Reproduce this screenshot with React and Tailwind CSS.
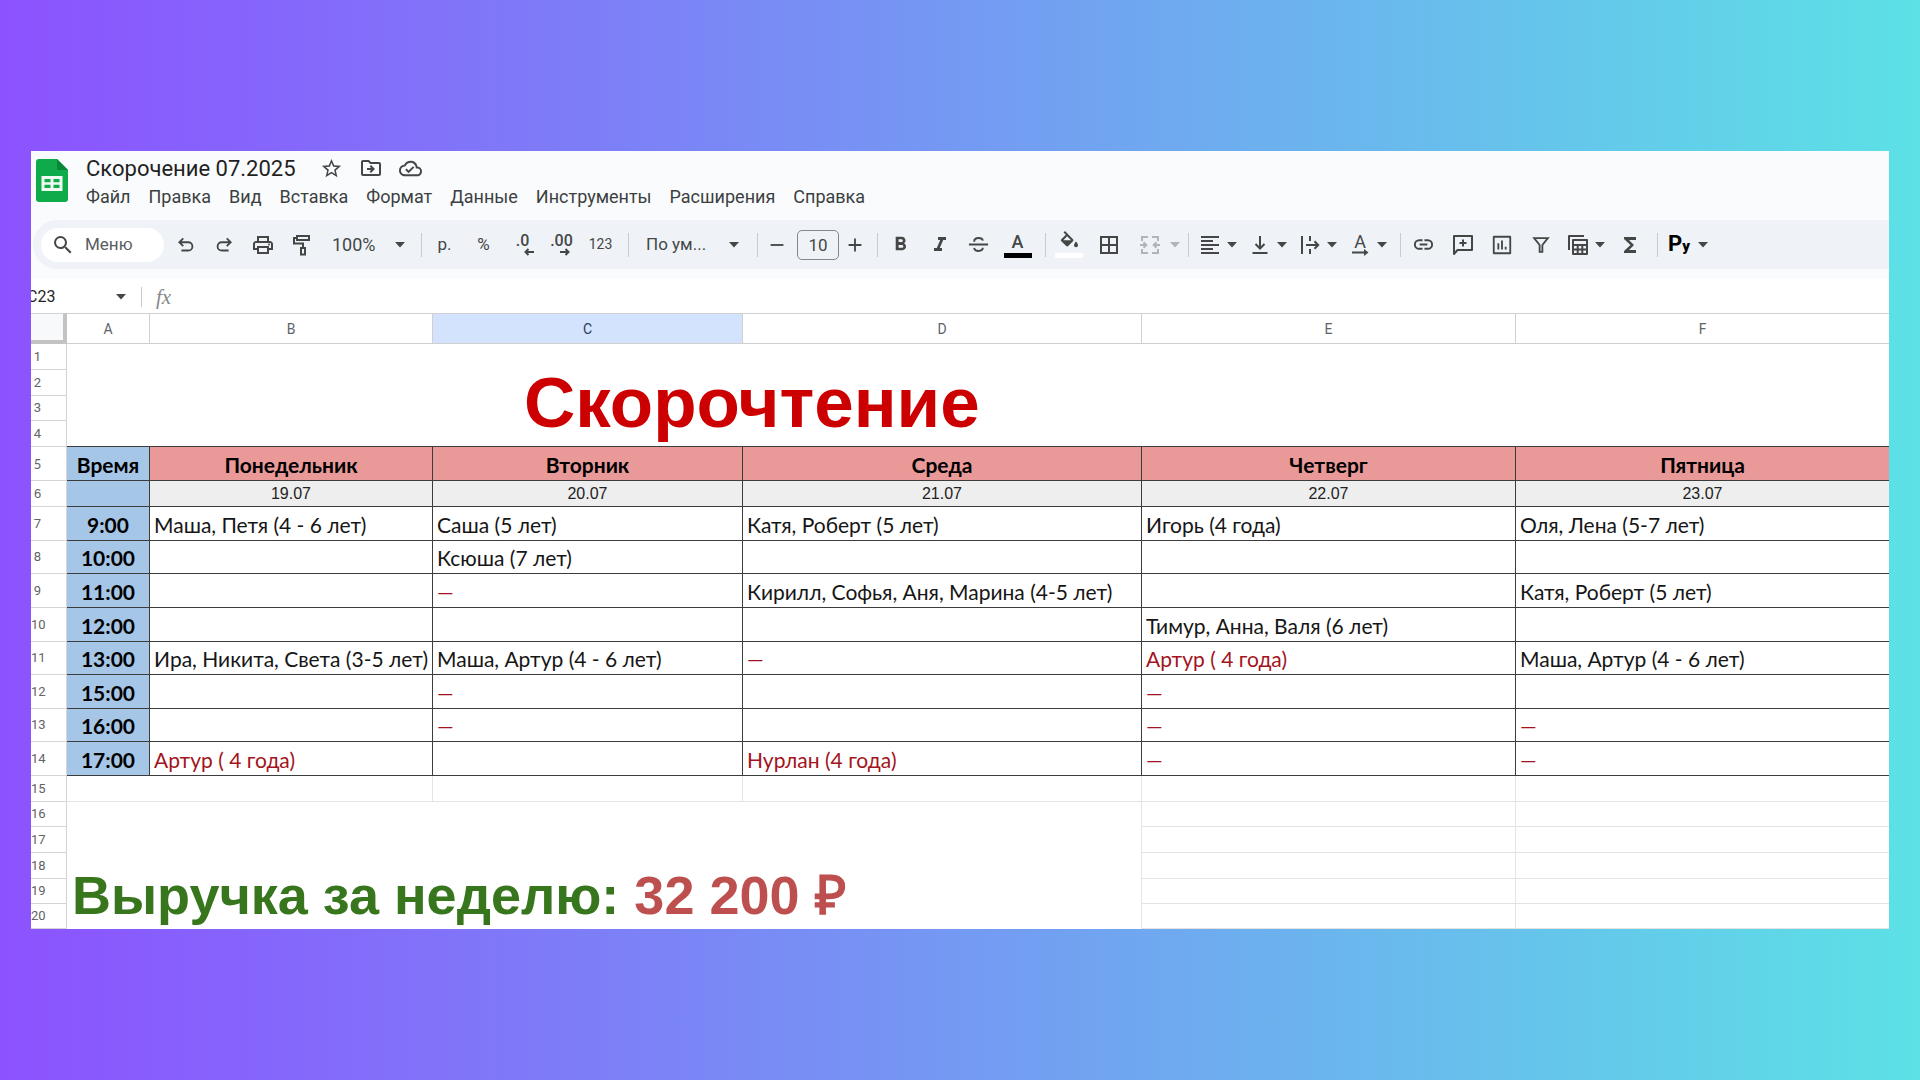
import { useState } from 'react';
import {
  MdSearch,
  MdStarBorder,
  MdOutlineDriveFileMove,
  MdOutlineCloudDone,
  MdOutlinePrint,
  MdFormatBold,
  MdFormatItalic,
  MdBorderAll,
  MdFormatAlignLeft,
  MdFunctions,
} from 'react-icons/md';

const menuItems = ['Файл', 'Правка', 'Вид', 'Вставка', 'Формат', 'Данные', 'Инструменты', 'Расширения', 'Справка'];

const columns = ['A', 'B', 'C', 'D', 'E', 'F'];

const days = ['Понедельник', 'Вторник', 'Среда', 'Четверг', 'Пятница'];
const dates = ['19.07', '20.07', '21.07', '22.07', '23.07'];

// "red" marks cancelled or free slots
const red = (text) => ({ text, red: true });

const lessons = [
  { row: 7, height: 'h-[34px]', time: '9:00', cells: ['Маша, Петя (4 - 6 лет)', 'Саша (5 лет)', 'Катя, Роберт (5 лет)', 'Игорь (4 года)', 'Оля, Лена (5-7 лет)'] },
  { row: 8, height: 'h-[33px]', time: '10:00', cells: ['', 'Ксюша (7 лет)', '', '', ''] },
  { row: 9, height: 'h-[34px]', time: '11:00', cells: ['', red('—'), 'Кирилл, Софья, Аня, Марина (4-5 лет)', '', 'Катя, Роберт (5 лет)'] },
  { row: 10, height: 'h-[34px]', time: '12:00', cells: ['', '', '', 'Тимур, Анна, Валя (6 лет)', ''] },
  { row: 11, height: 'h-[33px]', time: '13:00', cells: ['Ира, Никита, Света (3-5 лет)', 'Маша, Артур (4 - 6 лет)', red('—'), red('Артур ( 4 года)'), 'Маша, Артур (4 - 6 лет)'] },
  { row: 12, height: 'h-[34px]', time: '15:00', cells: ['', red('—'), '', red('—'), ''] },
  { row: 13, height: 'h-[33px]', time: '16:00', cells: ['', red('—'), '', red('—'), red('—')] },
  { row: 14, height: 'h-[34px]', time: '17:00', cells: [red('Артур ( 4 года)'), '', red('Нурлан (4 года)'), red('—'), red('—')] },
];

function Svg({ children, size = 24 }) {
  return (
    <svg width={size} height={size} viewBox="0 0 24 24" fill="none" stroke="currentColor" strokeWidth="2">
      {children}
    </svg>
  );
}

function Caret() {
  return (
    <svg className="shrink-0" width="10" height="6" viewBox="0 0 10 6" fill="currentColor">
      <path d="M0 0h10L5 5.5z" />
    </svg>
  );
}

function ToolButton({ label, children }) {
  return (
    <button type="button" aria-label={label} className="flex h-9 w-[39px] shrink-0 items-center justify-center">
      {children}
    </button>
  );
}

function SplitButton({ label, children }) {
  return (
    <button type="button" aria-label={label} className="flex h-9 w-[50px] shrink-0 items-center gap-[5px] pl-1.5">
      {children}
      <Caret />
    </button>
  );
}

function Divider() {
  return <span className="mr-[3px] ml-2 h-6 w-px shrink-0 bg-[#c7cbd1]" />;
}

function SheetsLogo() {
  return (
    <svg width="32" height="43" viewBox="0 0 32 43">
      <path d="M3 0h18l11 11v29a3 3 0 0 1-3 3H3a3 3 0 0 1-3-3V3a3 3 0 0 1 3-3z" fill="#0fab4b" />
      <path d="M21 0l11 11H23a2 2 0 0 1-2-2z" fill="#0b8537" />
      <path d="M5.500 17h21v15h-21zM8.500 20v3.200h6V20zm9 0v3.200h6V20zm-9 5.800V29h6v-3.200zm9 0V29h6v-3.200z" fill="#f1faf4" fillRule="evenodd" />
    </svg>
  );
}

function Header() {
  return (
    <div className="flex items-start gap-[18px] pt-[3px] pl-[5px]">
      <div className="pt-[5px]">
        <SheetsLogo />
      </div>
      <div>
        <div className="flex h-7 items-center text-[#444746]">
          <h1 className="mr-6 text-[22px] text-[#1f1f1f]">Скорочение 07.2025</h1>
          <div className="flex items-center gap-4">
            <button type="button" aria-label="Добавить в избранное"><MdStarBorder size={23} /></button>
            <button type="button" aria-label="Переместить"><MdOutlineDriveFileMove size={24} /></button>
            <button type="button" aria-label="Сохранено на диске"><MdOutlineCloudDone size={23} /></button>
          </div>
        </div>
        <nav className="flex h-7 items-center gap-[18px] text-[18px] text-[#3c3f41]">
          {menuItems.map((item) => (
            <button key={item} type="button">{item}</button>
          ))}
        </nav>
      </div>
    </div>
  );
}

function Toolbar() {
  const [fontSize, setFontSize] = useState(10);

  return (
    <div className="mt-2.5 ml-0.5 flex h-[49px] items-center rounded-l-full bg-[#eff3f8] pl-2 text-[#444746]">
      <label className="mr-[3px] flex h-[34px] w-[123px] shrink-0 items-center rounded-full bg-white pl-2.5">
        <MdSearch size={24} className="shrink-0" />
        <input
          type="text"
          aria-label="Поиск в меню"
          placeholder="Меню"
          className="ml-2.5 w-16 bg-transparent text-[17px] outline-none placeholder:text-[#5a5d5f]"
        />
      </label>

      <div className="flex shrink-0">
        <button type="button" aria-label="Отменить" className="flex h-9 w-[38px] items-center justify-center">
          <Svg size={22}><path d="M9 4.700 4.700 9 9 13.300M5 9h9.500a4.500 4.500 0 0 1 0 9H7" /></Svg>
        </button>
        <button type="button" aria-label="Повторить" className="flex h-9 w-[38px] items-center justify-center">
          <Svg size={22}><path d="M15 4.700 19.300 9 15 13.300M19 9H9.500a4.500 4.500 0 0 0 0 9H17" /></Svg>
        </button>
        <button type="button" aria-label="Печать" className="flex h-9 w-10 items-center justify-center">
          <MdOutlinePrint size={24} />
        </button>
        <button type="button" aria-label="Копировать форматирование" className="flex h-9 w-[38px] items-center justify-center">
          <Svg>
            <path d="M7 3h12v4H7zM7 5H4v5.500h9V15M11 15h4v6.500h-4z" />
          </Svg>
        </button>
      </div>

      <div className="relative flex w-[92px] shrink-0 items-center">
        <select aria-label="Масштаб" className="w-full appearance-none bg-transparent pl-[11px] text-[18px] outline-none">
          <option>100%</option>
        </select>
        <span className="pointer-events-none absolute right-2"><Caret /></span>
      </div>
      <Divider />

      <ToolButton label="Денежный формат"><span className="text-[17px]">р.</span></ToolButton>
      <ToolButton label="Процентный формат"><span className="text-[17px]">%</span></ToolButton>
      <ToolButton label="Меньше знаков после запятой">
        <span className="flex flex-col items-center">
          <span className="text-[16px] leading-[14px] font-medium">.0</span>
          <svg className="ml-3" width="10" height="8" viewBox="0 0 10 8" fill="none" stroke="currentColor" strokeWidth="2">
            <path d="M10 4H2M4.500 1l-3 3 3 3" />
          </svg>
        </span>
      </ToolButton>
      <ToolButton label="Больше знаков после запятой">
        <span className="flex flex-col items-center">
          <span className="text-[16px] leading-[14px] font-medium">.00</span>
          <svg className="ml-2" width="10" height="8" viewBox="0 0 10 8" fill="none" stroke="currentColor" strokeWidth="2">
            <path d="M0 4h8M5.500 1l3 3-3 3" />
          </svg>
        </span>
      </ToolButton>
      <ToolButton label="Другие форматы"><span className="text-[14px]">123</span></ToolButton>
      <Divider />

      <div className="relative flex w-[117px] shrink-0 items-center">
        <select aria-label="Шрифт" className="w-full appearance-none bg-transparent pl-3.5 text-[17px] outline-none">
          <option>По ум...</option>
        </select>
        <span className="pointer-events-none absolute right-2.5"><Caret /></span>
      </div>
      <Divider />

      <button
        type="button"
        aria-label="Уменьшить размер"
        onClick={() => setFontSize(fontSize - 1)}
        className="flex h-9 w-8 shrink-0 items-center justify-center"
      >
        <Svg size={22}><path d="M5 12h14" /></Svg>
      </button>
      <input
        type="text"
        aria-label="Размер шрифта"
        value={fontSize}
        onChange={(e) => setFontSize(Number(e.target.value) || 0)}
        className="ml-1 h-[30px] w-[42px] shrink-0 rounded-[5px] border border-[#84878a] bg-transparent text-center text-[17px] outline-none"
      />
      <button
        type="button"
        aria-label="Увеличить размер"
        onClick={() => setFontSize(fontSize + 1)}
        className="flex h-9 w-8 shrink-0 items-center justify-center"
      >
        <Svg size={22}><path d="M5 12h14M12 5v14" /></Svg>
      </button>
      <span className="mr-[3px] ml-1.5 h-6 w-px shrink-0 bg-[#c7cbd1]" />

      <ToolButton label="Полужирный"><MdFormatBold size={23} /></ToolButton>
      <ToolButton label="Курсив"><MdFormatItalic size={24} /></ToolButton>
      <ToolButton label="Зачеркнутый">
        <Svg size={23}><path d="M2 12h20M7.500 9c0-2.500 2-3.700 4.500-3.700S16.300 6.500 16.500 8M7.500 15.500c.3 2 2 3.200 4.500 3.200s4.500-1.200 4.500-3.200" /></Svg>
      </ToolButton>
      <ToolButton label="Цвет текста">
        <span className="flex flex-col items-center gap-1 pt-1">
          <span className="text-[18px] leading-[14px] font-medium">A</span>
          <span className="h-[5px] w-7 bg-black" />
        </span>
      </ToolButton>
      <Divider />

      <ToolButton label="Цвет заливки">
        <span className="flex flex-col items-center gap-[3px]">
          <svg width="20" height="19" viewBox="0 0 20 19" fill="currentColor">
            <path d="M4.500 1.500 6 0l8 8.200c.6.600.6 1.400 0 2L9.200 15c-.6.600-1.400.6-2 0L2.300 10.200c-.6-.6-.6-1.400 0-2L6.800 3.800zM8.200 5.300 4.300 9.200h7.800z" fillRule="evenodd" />
            <path d="M17 10.500s2 2.200 2 3.700a2 2 0 0 1-4 0c0-1.500 2-3.700 2-3.700z" />
          </svg>
          <span className="h-[5px] w-7 bg-white" />
        </span>
      </ToolButton>
      <button type="button" aria-label="Границы" className="flex h-9 w-[42px] shrink-0 items-center justify-center">
        <MdBorderAll size={24} />
      </button>
      <button type="button" disabled aria-label="Объединить ячейки" className="flex h-9 w-[50px] shrink-0 items-center gap-2 pl-2 text-[#b1b4b8]">
        <Svg>
          <path d="M10 4H4v4M14 4h6v4M10 20H4v-4M14 20h6v-4M2 12h6M5.500 9.300 8.300 12l-2.800 2.700M22 12h-6M18.500 9.300 15.700 12l2.800 2.700" />
        </Svg>
        <Caret />
      </button>
      <Divider />

      <SplitButton label="Выравнивание по горизонтали"><MdFormatAlignLeft size={24} /></SplitButton>
      <SplitButton label="Выравнивание по вертикали">
        <Svg><path d="M4.500 20h15M12 3v12.500M7.500 11l4.500 4.500 4.500-4.500" /></Svg>
      </SplitButton>
      <SplitButton label="Перенос текста">
        <Svg><path d="M4 3v18M12 3v5M12 16v5M8 12h12M16.500 8.300 20.200 12l-3.700 3.700" /></Svg>
      </SplitButton>
      <SplitButton label="Поворот текста">
        <span className="flex w-6 flex-col items-center pt-0.5">
          <span className="text-[18px] leading-[14px]">A</span>
          <svg width="17" height="7" viewBox="0 0 17 7" fill="currentColor">
            <path d="M0 2.500h12V0l4.500 3.500L12 7V4.500H0z" />
          </svg>
        </span>
      </SplitButton>
      <Divider />

      <ToolButton label="Вставить ссылку">
        <Svg size={23}><path d="M11 7.500H7.500a4.500 4.500 0 0 0 0 9H11M13 7.500h3.500a4.500 4.500 0 0 1 0 9H13M8 12h8" /></Svg>
      </ToolButton>
      <ToolButton label="Добавить комментарий">
        <Svg><path d="M3 21V3h18v14H6.500zM12 6.500v7M8.500 10h7" strokeLinejoin="round" /></Svg>
      </ToolButton>
      <ToolButton label="Вставить диаграмму">
        <Svg size={22}><path d="M3 3h18v18H3zM8 10v7M12 7v10M16 14v3" strokeLinejoin="round" /></Svg>
      </ToolButton>
      <ToolButton label="Создать фильтр">
        <Svg size={22}><path d="M4.500 4.500h15L13.500 12v7.500h-3V12z" /></Svg>
      </ToolButton>
      <SplitButton label="Представления таблицы">
        <Svg>
          <path d="M3 17V3h15M7 7h14v14H7zM7 12h14M7 16.500h14M11.700 12v9M16.300 12v9" strokeLinejoin="round" />
        </Svg>
      </SplitButton>
      <ToolButton label="Функции"><MdFunctions size={24} /></ToolButton>
      <Divider />
      <button type="button" aria-label="Python" className="flex h-9 w-[52px] shrink-0 items-center gap-[7px] pl-1.5">
        <span className="flex w-6 items-baseline justify-center text-black">
          <span className="text-[22px] leading-6 font-bold">P</span>
          <span className="text-[15px] leading-6 font-black">y</span>
        </span>
        <Caret />
      </button>
    </div>
  );
}

function FormulaBar() {
  return (
    <div className="flex h-[34px] items-center overflow-hidden bg-white pt-0.5">
      <input
        type="text"
        aria-label="Ячейка"
        defaultValue="C23"
        className="-ml-1 w-[89px] shrink-0 bg-transparent text-[16px] text-[#1f1f1f] outline-none"
      />
      <span className="text-[#444746]"><Caret /></span>
      <span className="ml-[15px] h-5 w-px bg-[#c7cbd1]" />
      <label htmlFor="formula" className="ml-3.5 font-['Liberation_Serif',serif] text-[21px] leading-6 text-[#85888b] italic">fx</label>
      <input id="formula" type="text" className="ml-3 grow bg-transparent text-[16px] outline-none" />
    </div>
  );
}

function RowNumber({ n, height }) {
  return (
    <th scope="row" className={`${height} border-r border-b border-[#d5d5d5] p-0 pr-[22px] text-center text-[13px] leading-4 font-normal whitespace-nowrap text-[#606367]`}>
      {n}
    </th>
  );
}

function LessonCell({ value }) {
  const text = value.text ?? value;
  return (
    <td className={`border-r border-b border-[#3c3c3c] p-0 pl-1 align-bottom font-[Lato,sans-serif] text-[21px] leading-[30px] whitespace-nowrap last:border-r-0 ${value.red ? 'text-[#a31420]' : 'text-[#161616]'}`}>
      {text}
    </td>
  );
}

function Sheet() {
  return (
    <table className="w-full table-fixed border-separate border-spacing-0 bg-white">
      <colgroup>
        <col className="w-9" />
        <col className="w-[83px]" />
        <col className="w-[283px]" />
        <col className="w-[310px]" />
        <col className="w-[399px]" />
        <col className="w-[374px]" />
        <col />
      </colgroup>
      <thead>
        <tr>
          <td className="h-[31px] border-t border-r-4 border-b-4 border-t-[#d5d5d5] border-r-[#c3c3c3] border-b-[#c3c3c3] bg-[#f8f9fa] p-0" />
          {columns.map((col) => (
            <th
              key={col}
              scope="col"
              className={`border-t border-r border-b border-[#d0d0d0] p-0 text-[14px] leading-5 font-normal last:border-r-0 ${col === 'C' ? 'bg-[#d3e3fd] text-[#2c3b52]' : 'text-[#606367]'}`}
            >
              {col}
            </th>
          ))}
        </tr>
      </thead>
      <tbody>
        {/* Merged title block, rows 1-4 */}
        <tr>
          <RowNumber n={1} height="h-[26px]" />
          <td colSpan={6} rowSpan={4} className="border-b border-[#3c3c3c] p-0 pl-[457px] align-bottom font-['Liberation_Sans',Arial,sans-serif] text-[71px] leading-[86px] font-bold whitespace-nowrap text-[#cc0000]">
            Скорочтение
          </td>
        </tr>
        <tr><RowNumber n={2} height="h-[26px]" /></tr>
        <tr><RowNumber n={3} height="h-[25px]" /></tr>
        <tr><RowNumber n={4} height="h-[26px]" /></tr>

        {/* Days */}
        <tr className="font-[Lato,sans-serif] text-[21px] leading-[30px] font-bold text-black">
          <RowNumber n={5} height="h-[34px]" />
          <td className="border-r border-b border-[#3c3c3c] bg-[#a5c6e7] p-0 text-center align-bottom">Время</td>
          {days.map((day) => (
            <td key={day} className="border-r border-b border-[#3c3c3c] bg-[#ea9999] p-0 text-center align-bottom last:border-r-0">
              {day}
            </td>
          ))}
        </tr>
        <tr className="font-['Liberation_Sans',Arial,sans-serif] text-[16px] leading-5 text-[#222]">
          <RowNumber n={6} height="h-[26px]" />
          <td className="border-r border-b border-[#3c3c3c] bg-[#a5c6e7] p-0" />
          {dates.map((date) => (
            <td key={date} className="border-r border-b border-[#3c3c3c] bg-[#eeeeee] p-0 text-center last:border-r-0">
              {date}
            </td>
          ))}
        </tr>

        {/* Lessons */}
        {lessons.map((lesson) => (
          <tr key={lesson.row}>
            <RowNumber n={lesson.row} height={lesson.height} />
            <td className="border-r border-b border-[#3c3c3c] bg-[#a5c6e7] p-0 text-center align-bottom font-[Lato,sans-serif] text-[21px] leading-[30px] font-bold text-black">
              {lesson.time}
            </td>
            {lesson.cells.map((cell, i) => (
              <LessonCell key={i} value={cell} />
            ))}
          </tr>
        ))}

        <tr>
          <RowNumber n={15} height="h-[26px]" />
          <td colSpan={2} className="border-r border-b border-[#e3e3e3]" />
          <td className="border-r border-b border-[#e3e3e3]" />
          <td className="border-r border-b border-[#e3e3e3]" />
          <td className="border-r border-b border-[#e3e3e3]" />
          <td className="border-b border-[#e3e3e3]" />
        </tr>

        {/* Weekly revenue, rows 16-20 */}
        <tr>
          <RowNumber n={16} height="h-[25px]" />
          <td colSpan={4} rowSpan={5} className="border-r border-[#e3e3e3] p-0 pl-[5px] align-bottom font-['Liberation_Sans',Arial,sans-serif] text-[54px] leading-[68px] font-bold whitespace-nowrap text-[#38761d]">
            Выручка за неделю: <span className="text-[#bd4f4f]">32 200 ₽</span>
          </td>
          <td className="border-r border-b border-[#e3e3e3]" />
          <td className="border-b border-[#e3e3e3]" />
        </tr>
        {[17, 18, 19, 20].map((n) => (
          <tr key={n}>
            <RowNumber n={n} height={n < 19 ? 'h-[26px]' : 'h-[25px]'} />
            <td className="border-r border-b border-[#e3e3e3]" />
            <td className="border-b border-[#e3e3e3]" />
          </tr>
        ))}
      </tbody>
    </table>
  );
}

export default function App() {
  return (
    <div className="flex min-h-screen items-center bg-linear-to-r/srgb from-[#8c52ff] to-[#5ce1e6] px-[31px] font-[Roboto,sans-serif]">
      <main className="w-full overflow-hidden bg-white">
        <div className="bg-[#f9fbfd] pb-2.5">
          <Header />
          <Toolbar />
        </div>
        <FormulaBar />
        <Sheet />
      </main>
    </div>
  );
}
